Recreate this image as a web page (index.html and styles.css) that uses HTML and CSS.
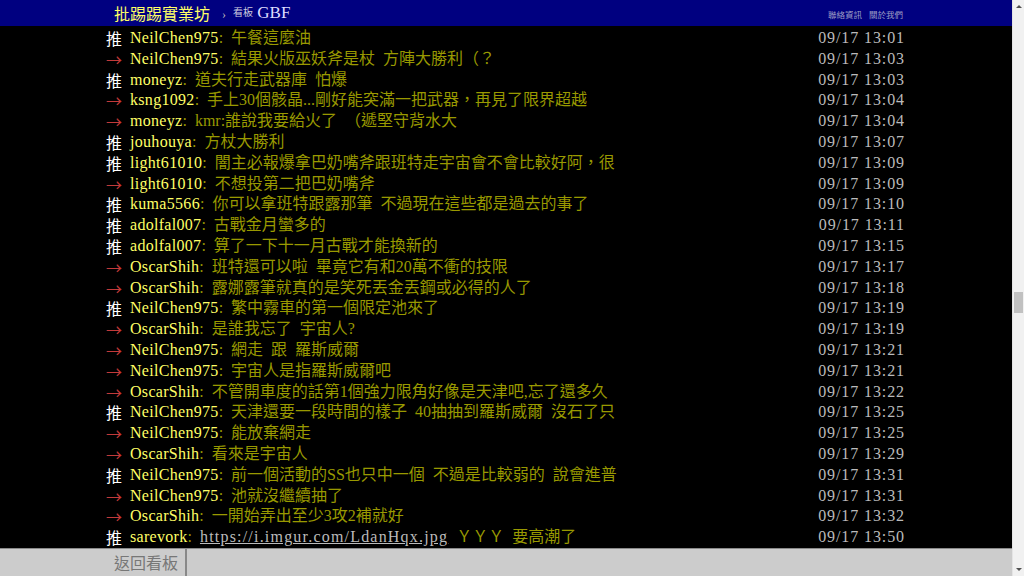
FILE: index.html
```html
<!DOCTYPE html>
<html lang="zh-Hant">
<head>
    <meta charset="UTF-8">
    <title>[閒聊] GBF - 看板 GBF - 批踢踢實業坊</title>
    <link rel="stylesheet" href="styles.css">
</head>
<body>
    <div class="page">
        <div class="topbar">
            <div class="bar-inner">
                <a class="site-title" href="#">批踢踢實業坊</a>
                <span class="crumb-sep">›</span>
                <a class="board" href="#"><span class="board-label">看板</span> GBF</a>
                <div class="top-links">
                    <a href="#">聯絡資訊</a>
                    <a href="#">關於我們</a>
                </div>
            </div>
        </div>

        <div class="main-container">
            <div class="bbs-screen">
                <div class="push"><span class="push-tag tag-good">推</span><span class="push-userid">NeilChen975</span><span class="push-content">: 午餐這麼油</span><span class="push-ipdatetime">09/17 13:01</span></div>
                <div class="push"><span class="push-tag tag-arrow">→</span><span class="push-userid">NeilChen975</span><span class="push-content">: 結果火版巫妖斧是杖 方陣大勝利（？</span><span class="push-ipdatetime">09/17 13:03</span></div>
                <div class="push"><span class="push-tag tag-good">推</span><span class="push-userid">moneyz</span><span class="push-content">: 道夫行走武器庫 怕爆</span><span class="push-ipdatetime">09/17 13:03</span></div>
                <div class="push"><span class="push-tag tag-arrow">→</span><span class="push-userid">ksng1092</span><span class="push-content">: 手上30個骸晶...剛好能突滿一把武器，再見了限界超越</span><span class="push-ipdatetime">09/17 13:04</span></div>
                <div class="push"><span class="push-tag tag-arrow">→</span><span class="push-userid">moneyz</span><span class="push-content">: kmr:誰說我要給火了 （遞堅守背水大</span><span class="push-ipdatetime">09/17 13:04</span></div>
                <div class="push"><span class="push-tag tag-good">推</span><span class="push-userid">jouhouya</span><span class="push-content">: 方杖大勝利</span><span class="push-ipdatetime">09/17 13:07</span></div>
                <div class="push"><span class="push-tag tag-good">推</span><span class="push-userid">light61010</span><span class="push-content">: 闇主必報爆拿巴奶嘴斧跟班特走宇宙會不會比較好阿，很</span><span class="push-ipdatetime">09/17 13:09</span></div>
                <div class="push"><span class="push-tag tag-arrow">→</span><span class="push-userid">light61010</span><span class="push-content">: 不想投第二把巴奶嘴斧</span><span class="push-ipdatetime">09/17 13:09</span></div>
                <div class="push"><span class="push-tag tag-good">推</span><span class="push-userid">kuma5566</span><span class="push-content">: 你可以拿班特跟露那筆 不過現在這些都是過去的事了</span><span class="push-ipdatetime">09/17 13:10</span></div>
                <div class="push"><span class="push-tag tag-good">推</span><span class="push-userid">adolfal007</span><span class="push-content">: 古戰金月蠻多的</span><span class="push-ipdatetime">09/17 13:11</span></div>
                <div class="push"><span class="push-tag tag-good">推</span><span class="push-userid">adolfal007</span><span class="push-content">: 算了一下十一月古戰才能換新的</span><span class="push-ipdatetime">09/17 13:15</span></div>
                <div class="push"><span class="push-tag tag-arrow">→</span><span class="push-userid">OscarShih</span><span class="push-content">: 班特還可以啦 畢竟它有和20萬不衝的技限</span><span class="push-ipdatetime">09/17 13:17</span></div>
                <div class="push"><span class="push-tag tag-arrow">→</span><span class="push-userid">OscarShih</span><span class="push-content">: 露娜露筆就真的是笑死丟金丟鋼或必得的人了</span><span class="push-ipdatetime">09/17 13:18</span></div>
                <div class="push"><span class="push-tag tag-good">推</span><span class="push-userid">NeilChen975</span><span class="push-content">: 繁中霧車的第一個限定池來了</span><span class="push-ipdatetime">09/17 13:19</span></div>
                <div class="push"><span class="push-tag tag-arrow">→</span><span class="push-userid">OscarShih</span><span class="push-content">: 是誰我忘了 宇宙人?</span><span class="push-ipdatetime">09/17 13:19</span></div>
                <div class="push"><span class="push-tag tag-arrow">→</span><span class="push-userid">NeilChen975</span><span class="push-content">: 網走 跟 羅斯威爾</span><span class="push-ipdatetime">09/17 13:21</span></div>
                <div class="push"><span class="push-tag tag-arrow">→</span><span class="push-userid">NeilChen975</span><span class="push-content">: 宇宙人是指羅斯威爾吧</span><span class="push-ipdatetime">09/17 13:21</span></div>
                <div class="push"><span class="push-tag tag-arrow">→</span><span class="push-userid">OscarShih</span><span class="push-content">: 不管開車度的話第1個強力限角好像是天津吧,忘了還多久</span><span class="push-ipdatetime">09/17 13:22</span></div>
                <div class="push"><span class="push-tag tag-good">推</span><span class="push-userid">NeilChen975</span><span class="push-content">: 天津還要一段時間的樣子 40抽抽到羅斯威爾 沒石了只</span><span class="push-ipdatetime">09/17 13:25</span></div>
                <div class="push"><span class="push-tag tag-arrow">→</span><span class="push-userid">NeilChen975</span><span class="push-content">: 能放棄網走</span><span class="push-ipdatetime">09/17 13:25</span></div>
                <div class="push"><span class="push-tag tag-arrow">→</span><span class="push-userid">OscarShih</span><span class="push-content">: 看來是宇宙人</span><span class="push-ipdatetime">09/17 13:29</span></div>
                <div class="push"><span class="push-tag tag-good">推</span><span class="push-userid">NeilChen975</span><span class="push-content">: 前一個活動的SS也只中一個 不過是比較弱的 說會進普</span><span class="push-ipdatetime">09/17 13:31</span></div>
                <div class="push"><span class="push-tag tag-arrow">→</span><span class="push-userid">NeilChen975</span><span class="push-content">: 池就沒繼續抽了</span><span class="push-ipdatetime">09/17 13:31</span></div>
                <div class="push"><span class="push-tag tag-arrow">→</span><span class="push-userid">OscarShih</span><span class="push-content">: 一開始弄出至少3攻2補就好</span><span class="push-ipdatetime">09/17 13:32</span></div>
                <div class="push"><span class="push-tag tag-good">推</span><span class="push-userid">sarevork</span><span class="push-content">: <a href="#">https://i.imgur.com/LdanHqx.jpg</a> ＹＹＹ 要高潮了</span><span class="push-ipdatetime">09/17 13:50</span></div>
            </div>
        </div>

        <div class="bottombar">
            <div class="bar-inner">
                <a class="back-board" href="#">返回看板</a>
            </div>
        </div>
    </div>

    <div class="scrollbar">
        <span class="arrow-up"></span>
        <span class="thumb"></span>
        <span class="arrow-down"></span>
    </div>
</body>
</html>
```

FILE: styles.css
```css
html, body {
    height: 100%;
}
body {
    margin: 0;
    display: flex;
    background-color: #000000;
    color: #bbbbbb;
    font-family: "Liberation Serif", "Noto Sans CJK TC", serif;
    overflow: hidden;
}
a {
    text-decoration: none;
    color: inherit;
}
.page {
    flex: 1;
    display: flex;
    flex-direction: column;
    min-width: 0;
}
.bar-inner {
    width: 800px;
    margin: 0 auto;
    display: flex;
    align-items: center;
    height: 100%;
    box-sizing: border-box;
}

/* top bar */
.topbar {
    height: 26px;
    background-color: #000080;
    flex-shrink: 0;
}
.topbar .bar-inner {
    padding: 0 3px 0 8px;
}
.site-title {
    color: #ffff66;
    font-size: 16px;
    font-family: "Noto Sans CJK TC", sans-serif;
    line-height: 26px;
}
.crumb-sep {
    color: #bbbbbb;
    font-size: 12px;
    margin: 2px 7px 0 12px;
}
.board {
    color: #ddddff;
    font-size: 17px;
}
.board-label {
    font-size: 10px;
    font-family: "Noto Sans CJK TC", sans-serif;
    vertical-align: 2px;
    color: #ccccdd;
}
.top-links {
    margin-left: auto;
    display: flex;
    gap: 7px;
}
.top-links a {
    font-size: 8.5px;
    font-family: "Noto Sans CJK TC", sans-serif;
    color: #9e9ec4;
    margin-top: 2px;
}

/* pushes */
.main-container {
    flex: 1;
    overflow: hidden;
}
.bbs-screen {
    width: 800px;
    margin: 0 auto;
    padding-top: 2px;
}
.push {
    display: flex;
    font-size: 16px;
    line-height: 20.8px;
    white-space: pre;
    word-spacing: 4px;
}
.push-tag {
    display: inline-block;
    width: 24px;
    font-family: "Noto Sans CJK TC", sans-serif;
}
.tag-good {
    color: #ffffff;
}
.tag-arrow {
    color: #c33a3a;
}
.push-userid {
    color: #ffff66;
    letter-spacing: 0.3px;
}
.push-content {
    color: #999900;
}
.push-content a {
    color: #bbbbbb;
    text-decoration: underline;
    letter-spacing: 1.2px;
}
.push-ipdatetime {
    margin-left: auto;
    color: #bbbbbb;
    letter-spacing: 0.9px;
    word-spacing: 0;
    padding-right: 1px;
}

/* bottom bar */
.bottombar {
    height: 27px;
    flex-shrink: 0;
    background-color: #cccccc;
    border-top: 1px solid #8a8a8a;
}
.back-board {
    color: #777777;
    font-size: 16px;
    font-family: "Noto Sans CJK TC", sans-serif;
    padding: 0 7px 0 8px;
    height: 100%;
    line-height: 27px;
    border-right: 2px solid #888888;
}

/* fake scrollbar */
.scrollbar {
    width: 12px;
    flex-shrink: 0;
    background-color: #f1f1f1;
    border-left: 1px solid #e4e4e4;
    display: flex;
    flex-direction: column;
    align-items: center;
    box-sizing: border-box;
}
.arrow-up, .arrow-down {
    width: 0;
    height: 0;
    border-left: 3px solid transparent;
    border-right: 3px solid transparent;
}
.arrow-up {
    margin-top: 5px;
    border-bottom: 3px solid #505050;
}
.arrow-down {
    margin-top: auto;
    margin-bottom: 5px;
    border-top: 3px solid #505050;
}
.thumb {
    width: 9px;
    height: 21px;
    margin-top: 284px;
    background-color: #c1c1c1;
}
```
